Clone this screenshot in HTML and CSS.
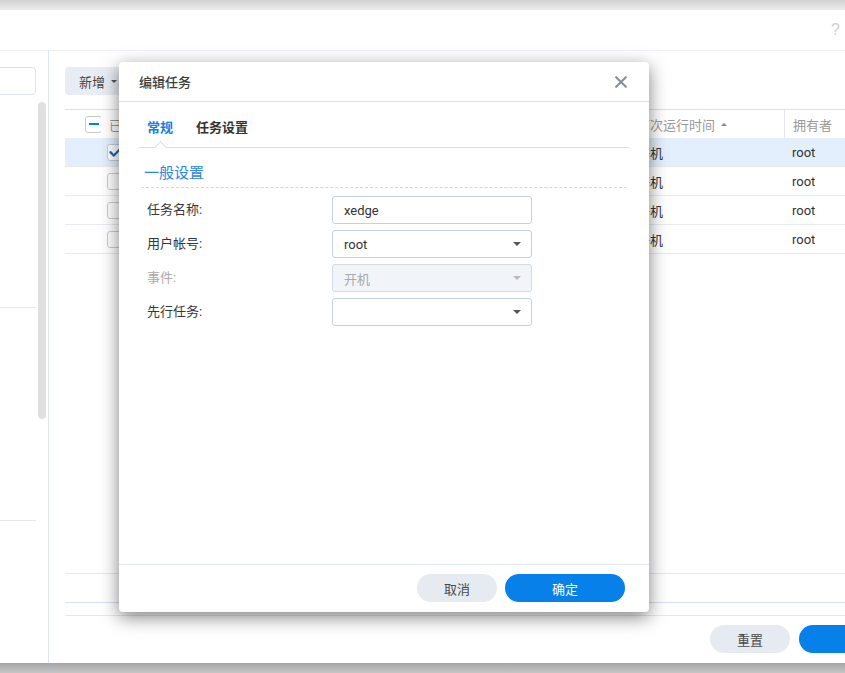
FILE: index.html
```html
<!DOCTYPE html>
<html lang="zh-CN">
<head>
<meta charset="utf-8">
<title>编辑任务</title>
<link rel="stylesheet" href="styles.css">
</head>
<body>
<div class="window">
  <div class="topbar"><span class="help">?</span></div>
  <div class="content">
    <aside class="sidebar">
      <div class="search"></div>
      <div class="side-body">
        <div class="side-list">
          <div class="side-group g1"></div>
          <div class="side-group g2"></div>
        </div>
        <div class="scrollbar"></div>
      </div>
    </aside>
    <main class="main">
      <div class="toolbar">
        <button class="tool-btn">新增<span class="caret-down small"></span></button>
      </div>
      <div class="table">
        <div class="trow thead">
          <div class="cell c-a"><span class="checkbox indeterminate"></span></div>
          <div class="cell c-b">已启动</div>
          <div class="cell c-c">下次运行时间<span class="sort-up"></span></div>
          <div class="cell c-d sep">拥有者</div>
        </div>
        <div class="trow selected">
          <div class="cell c-a"></div>
          <div class="cell c-b row-check"><span class="checkbox checked"><svg viewBox="0 0 16 16" width="16" height="16"><path d="M2.5 8.2 L6.3 11.8 L13.5 4.2" fill="none" stroke="#1469cc" stroke-width="2.4" stroke-linecap="round" stroke-linejoin="round"/></svg></span></div>
          <div class="cell c-c">开机</div>
          <div class="cell c-d">root</div>
        </div>
        <div class="trow">
          <div class="cell c-a"></div>
          <div class="cell c-b row-check"><span class="checkbox"></span></div>
          <div class="cell c-c">开机</div>
          <div class="cell c-d">root</div>
        </div>
        <div class="trow">
          <div class="cell c-a"></div>
          <div class="cell c-b row-check"><span class="checkbox"></span></div>
          <div class="cell c-c">开机</div>
          <div class="cell c-d">root</div>
        </div>
        <div class="trow">
          <div class="cell c-a"></div>
          <div class="cell c-b row-check"><span class="checkbox"></span></div>
          <div class="cell c-c">开机</div>
          <div class="cell c-d">root</div>
        </div>
      </div>
      <div class="pager"></div>
      <div class="footer">
        <button class="pill gray">重置</button>
        <button class="pill blue wide" aria-label="应用"></button>
      </div>
    </main>
  </div>
</div>

<div class="modal">
  <div class="modal-header">
    <span class="modal-title">编辑任务</span>
    <span class="close">
      <svg viewBox="0 0 12 12" width="12" height="12"><path d="M1.2 1.2 L10.8 10.8 M10.8 1.2 L1.2 10.8" stroke="#8b9098" stroke-width="2.2" stroke-linecap="round"/></svg>
    </span>
  </div>
  <div class="modal-body">
    <div class="tabs">
      <div class="tab active">常规</div>
      <div class="tab">任务设置</div>
    </div>
    <div class="section">
      <div class="section-title">一般设置</div>
    </div>
    <div class="form">
      <label class="label">任务名称:</label>
      <div class="field">xedge</div>
      <label class="label">用户帐号:</label>
      <div class="field select">root<span class="caret-down"></span></div>
      <label class="label disabled">事件:</label>
      <div class="field select disabled">开机<span class="caret-down"></span></div>
      <label class="label">先行任务:</label>
      <div class="field select"><span></span><span class="caret-down"></span></div>
    </div>
  </div>
  <div class="modal-footer">
    <button class="pill gray">取消</button>
    <button class="pill blue wide">确定</button>
  </div>
</div>
</body>
</html>
```
FILE: styles.css
```css
* { box-sizing: border-box; }

body {
  margin: 0;
  width: 845px;
  height: 673px;
  overflow: hidden;
  position: relative;
  font-family: Roboto, "Noto Sans CJK SC", sans-serif;
  font-size: 13px;
  color: #333;
  background: linear-gradient(to bottom, #d2d2d2 0px, #ececec 10px, #ececec 600px, #a6a6a6 663px, #c6c6c6 673px);
}

button {
  font-family: inherit;
  font-size: 13px;
  border: none;
  cursor: pointer;
}

.window {
  margin-top: 10px;
  width: 940px;
  height: 653px;
  background: #fff;
  display: flex;
  flex-direction: column;
}

.topbar {
  height: 41px;
  border-bottom: 1px solid #edf0f4;
  display: flex;
  align-items: center;
  justify-content: flex-end;
  padding-right: 100px;
}

.help {
  color: #cfcfcf;
  font-size: 16px;
  font-family: "Liberation Sans", sans-serif;
}

.content {
  flex: 1;
  display: flex;
  min-height: 0;
}

/* sidebar */
.sidebar {
  width: 49px;
  border-right: 1px solid #dde5ee;
  padding-top: 16px;
}

.search {
  width: 40px;
  height: 28px;
  margin-left: -4px;
  border: 1px solid #dde3ea;
  border-radius: 4px;
}

.side-body {
  display: flex;
  margin-top: 7px;
}

.side-list { width: 36px; }

.side-group { border-bottom: 1px solid #e6e9ee; }
.side-group.g1 { height: 206px; }
.side-group.g2 { height: 213px; }

.scrollbar {
  width: 8px;
  height: 317px;
  margin-left: 2px;
  background: #e0e0e0;
  border-radius: 4px;
}

/* main */
.main {
  flex: 1;
  display: flex;
  flex-direction: column;
  padding: 16px 0 0 16px;
  min-width: 0;
}

.toolbar { display: flex; height: 28px; }

.tool-btn {
  height: 28px;
  padding: 0 14px;
  background: #e8edf3;
  border-radius: 4px;
  color: #444;
  display: flex;
  align-items: center;
}

.caret-down {
  width: 0;
  height: 0;
  border-left: 4px solid transparent;
  border-right: 4px solid transparent;
  border-top: 4px solid #555;
}
.caret-down.small {
  border-left-width: 3px;
  border-right-width: 3px;
  border-top-width: 3px;
  margin-left: 6px;
}

.table {
  margin-top: 14px;
  flex: 1;
  border-top: 1px solid #d9e1ea;
}

.trow {
  display: grid;
  grid-template-columns: 36px 528px 155px 1fr;
  height: 29px;
  border-bottom: 1px solid #e7ebf0;
}

.trow.thead {
  height: 28px;
  border-bottom: none;
}

.trow.selected { background: #e3effc; }

.cell {
  display: flex;
  align-items: center;
  padding-left: 8px;
  white-space: nowrap;
  overflow: hidden;
}

.thead .cell { color: #999; }
.c-a { padding-left: 20px; }
.c-b.row-check { padding-left: 6px; }
.sep { border-left: 1px solid #e1e7ee; }

.sort-up {
  width: 0;
  height: 0;
  margin-left: 6px;
  border-left: 3px solid transparent;
  border-right: 3px solid transparent;
  border-bottom: 3px solid #888;
}

.checkbox {
  width: 17px;
  height: 17px;
  border: 1px solid #c4cdd6;
  border-radius: 3px;
  background: #fff;
  display: flex;
  align-items: center;
  justify-content: center;
  flex: none;
}

.checkbox.indeterminate::before {
  content: "";
  width: 10px;
  height: 2px;
  background: #0d7ee6;
}

.checkbox.checked svg { display: block; }

.pager {
  height: 30px;
  border-top: 1px solid #e5e8ec;
  border-bottom: 1px solid #d5e0eb;
  margin-bottom: 12px;
}

.footer {
  border-top: 1px solid #e5e8ec;
  padding: 9px 21px 10px 0;
  display: flex;
  justify-content: flex-end;
  gap: 9px;
}

.pill {
  width: 80px;
  height: 28px;
  border-radius: 14px;
}
.pill.wide { width: 120px; }
.pill.gray { background: #e6ebf2; color: #4a4a4a; }
.pill.blue { background: #0780ea; color: #fff; }

/* modal */
.modal {
  position: absolute;
  left: 119px;
  top: 62px;
  width: 530px;
  height: 550px;
  background: #fff;
  border-radius: 4px;
  box-shadow: 0 5px 18px rgba(0, 0, 0, 0.5);
  display: flex;
  flex-direction: column;
}

.modal-header {
  height: 40px;
  border-bottom: 1px solid #d9e2eb;
  display: flex;
  align-items: center;
  justify-content: space-between;
  padding: 0 22px 0 20px;
}

.modal-title {
  font-weight: 500;
  color: #3f3f3f;
}

.close { display: flex; }

.modal-body {
  flex: 1;
  padding: 0 20px;
}

.tabs {
  display: flex;
  border-bottom: 1px solid #d6dfe8;
}

.tab {
  position: relative;
  padding: 16px 8px 9px;
  line-height: 20px;
  font-weight: 700;
  color: #333;
}
.tab + .tab { margin-left: 7px; }
.tab.active { color: #167fe0; }

.tab.active::after {
  content: "";
  position: absolute;
  left: 50%;
  bottom: -5px;
  width: 8px;
  height: 8px;
  margin-left: -4px;
  background: #fff;
  border-left: 1px solid #d6dfe8;
  border-top: 1px solid #d6dfe8;
  transform: rotate(45deg);
}

.section {
  margin: 0 2px;
  padding: 14px 0 3px 3px;
  border-bottom: 1px dashed #cdd8e3;
}

.section-title {
  font-size: 15px;
  line-height: 22px;
  color: #2d87dc;
}

.form {
  display: grid;
  grid-template-columns: 185px 200px;
  row-gap: 6px;
  align-items: center;
  margin-top: 8px;
  padding-left: 8px;
}

.label { color: #383838; line-height: 26px; }
.label.disabled { color: #aaa; }

.field {
  height: 28px;
  border: 1px solid #c6d0da;
  border-radius: 3px;
  padding: 0 10px 0 11px;
  display: flex;
  align-items: center;
  justify-content: space-between;
  color: #333;
}

.field.disabled {
  background: #f1f4f8;
  border-color: #d3dbe3;
  color: #aaa;
}
.field.disabled .caret-down { border-top-color: #bbb; }

.modal-footer {
  border-top: 1px solid #dfe6ee;
  padding: 9px 24px 10px;
  display: flex;
  justify-content: flex-end;
  gap: 8px;
}
```
